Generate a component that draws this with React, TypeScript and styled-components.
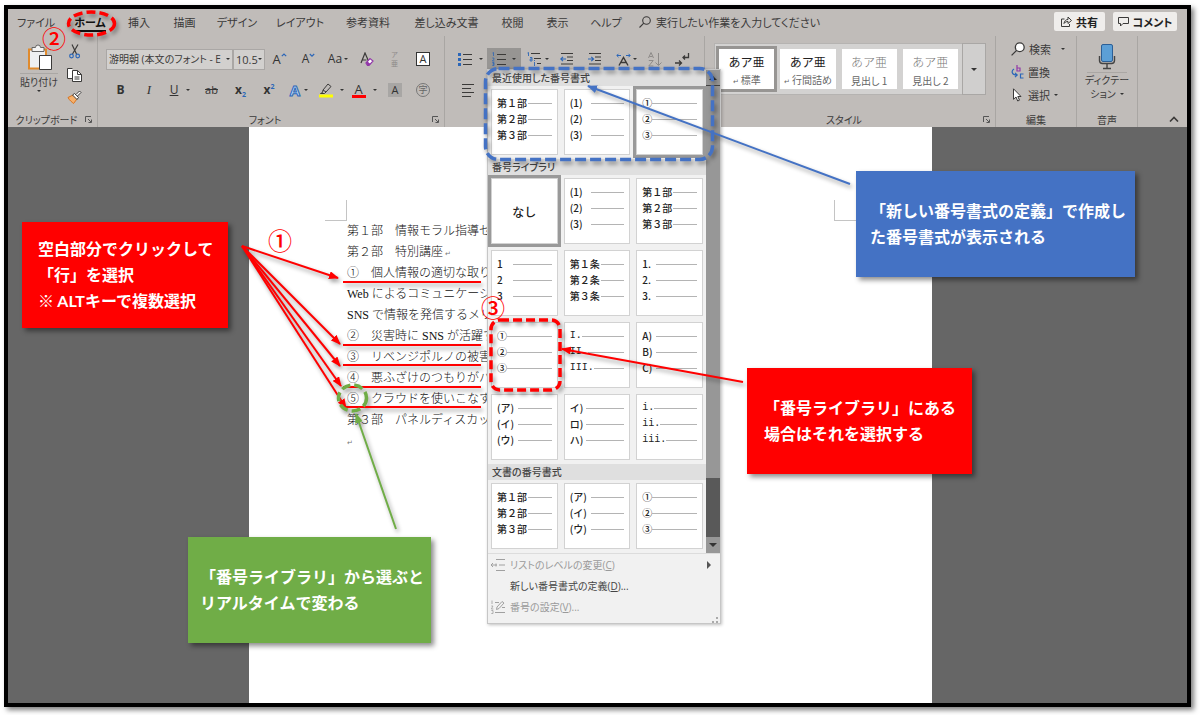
import React from 'react';
import styled, { createGlobalStyle, css } from 'styled-components';

const ui = `"Noto Sans CJK JP", "Noto Sans", sans-serif`;
const latin = `"Open Sans", "Noto Sans CJK JP", sans-serif`;
const ink = '#3b3a39';
const blue = '#2b66b8';
const ribbonGrey = '#c0bcb9';

const GlobalStyle = createGlobalStyle`
  *, *::before, *::after { box-sizing: border-box; }
  body { margin: 0; background: #fff; font-family: ${ui}; color: ${ink}; }
  button, select { font: inherit; color: inherit; margin: 0; padding: 0; border: 0; background: none; }
`;

const Stage = styled.div`
  position: relative;
  display: flex;
  min-height: 100vh;
  padding: 5px 9px 8px 4px;
  overflow: hidden;
`;

const Frame = styled.div`
  flex: 1;
  display: flex;
  flex-direction: column;
  min-width: 0;
  border: 4px solid #000;
  background: #666;
  box-shadow: 3px 3px 5px rgba(0, 0, 0, 0.5);
`;

/* ---------- Tab strip ---------- */

const TabStrip = styled.nav`
  display: flex;
  align-items: center;
  height: 27px;
  padding: 0 10px 2px 0;
  background: ${ribbonGrey};
  font-size: 11px;
  font-feature-settings: 'palt';
`;

const Tab = styled.button<{ $w: number; $active?: boolean }>`
  width: ${p => p.$w}px;
  height: 24px;
  line-height: 24px;
  white-space: nowrap;
  font-weight: ${p => (p.$active ? 700 : 400)};
  ${p => p.$active && css`
    color: #111;
    span { display: inline-block; height: 22px; border-bottom: 2px solid #111; }
  `}
`;

const TellMe = styled.button`
  display: flex;
  align-items: center;
  gap: 5px;
  margin-left: 7px;
  white-space: nowrap;
`;

const StripSpace = styled.div`flex: 1;`;

const StripButton = styled.button<{ $w: number }>`
  display: flex;
  align-items: center;
  justify-content: center;
  gap: 4px;
  width: ${p => p.$w}px;
  height: 19px;
  margin-left: 8px;
  border-radius: 2px;
  background: #efedeb;
  font-weight: 700;
  color: #222;
  white-space: nowrap;
`;

/* ---------- Ribbon ---------- */

const Ribbon = styled.div`
  display: flex;
  height: 91px;
  background: ${ribbonGrey};
`;

const Group = styled.section<{ $w?: number }>`
  display: flex;
  flex-direction: column;
  ${p => (p.$w ? css`width: ${p.$w}px; flex: none;` : css`flex: 1; min-width: 0;`)}
  border-right: 1px solid #a9a6a3;
`;

const GroupBody = styled.div`
  flex: 1;
  min-height: 0;
`;

const GroupFoot = styled.div<{ $launcher?: boolean }>`
  display: grid;
  grid-template-columns: 1fr ${p => (p.$launcher ? '12px' : '')};
  align-items: center;
  height: 15px;
  font-size: 10px;
  line-height: 14px;
  text-align: center;
  font-feature-settings: 'palt';
`;

const ClipboardBody = styled.div`
  display: flex;
  padding: 8px 0 0 12px;
  gap: 9px;
`;

const PasteButton = styled.button`
  display: flex;
  flex-direction: column;
  align-items: center;
  width: 38px;
  font-size: 10px;
  line-height: 16px;
  font-feature-settings: 'palt';
  white-space: nowrap;
`;

const SplitRule = styled.span`
  width: 100%;
  height: 1px;
  margin-top: 2px;
  background: #aaa7a4;
`;

const IconStack = styled.div`
  display: flex;
  flex-direction: column;
  gap: 8px;
  button { display: flex; }
`;

const Caret = styled.span<{ $size?: number }>`
  flex: none;
  border: ${p => p.$size ?? 2}px solid transparent;
  border-top-color: #333;
  border-bottom-width: 0;
`;

const ToolRows = styled.div`
  display: flex;
  flex-direction: column;
  gap: 11px;
  padding: 13px 0 0 8px;
`;

const ToolRow = styled.div`
  display: flex;
  align-items: center;
  height: 20px;
`;

const Tool = styled.button<{ $w: number; $on?: boolean; $gap?: number }>`
  display: flex;
  align-items: center;
  justify-content: center;
  gap: ${p => p.$gap ?? 4}px;
  flex: none;
  width: ${p => p.$w}px;
  height: 22px;
  font-family: ${latin};
  font-size: 13px;
  line-height: 20px;
  color: #333;
  background: ${p => (p.$on ? '#979593' : 'transparent')};
`;

const Combo = styled.span<{ $w: number; $size: number }>`
  display: flex;
  align-items: center;
  width: ${p => p.$w}px;
  height: 21px;
  padding-right: 2px;
  border: 1px solid #aaa7a5;
  background: #d2d0ce;
  select {
    flex: 1;
    min-width: 0;
    padding-left: 2px;
    appearance: none;
    font-family: ${latin};
    font-size: ${p => p.$size}px;
    white-space: nowrap;
    overflow: hidden;
    text-overflow: clip;
    font-feature-settings: 'palt';
  }
`;

const Glyph = styled.span<{ $bold?: boolean; $italic?: boolean; $line?: string; $size?: number }>`
  font-weight: ${p => (p.$bold ? 700 : 400)};
  font-style: ${p => (p.$italic ? 'italic' : 'normal')};
  font-family: ${p => (p.$italic ? '"Liberation Serif", serif' : 'inherit')};
  text-decoration: ${p => p.$line ?? 'none'};
  font-size: ${p => p.$size ?? 12}px;
  sub, sup { font-size: 7px; line-height: 0; color: ${blue}; }
`;

const BarGlyph = styled.span<{ $c: string }>`
  display: flex;
  justify-content: center;
  width: 14px;
  height: 15px;
  line-height: 12px;
  border-bottom: 3px solid ${p => p.$c};
`;

const OutlineGlyph = styled.span`
  font-size: 15px;
  font-weight: 700;
  color: #b9d5f2;
  -webkit-text-stroke: 1px ${blue};
`;

const BoxGlyph = styled.span<{ $kind: 'border' | 'shade' | 'ring' }>`
  display: flex;
  align-items: center;
  justify-content: center;
  width: 14px;
  height: 14px;
  font-size: ${p => (p.$kind === 'ring' ? 9 : 11)}px;
  line-height: 12px;
  ${p => p.$kind === 'border' && css`border: 1px solid #333; background: #fff;`}
  ${p => p.$kind === 'shade' && css`background: #a8a6a4;`}
  ${p => p.$kind === 'ring' && css`border: 1px solid #777; border-radius: 50%; color: #666;`}
`;

const Ruby = styled.span`
  display: flex;
  flex-direction: column;
  font-size: 7px;
  line-height: 9px;
  color: #8d8a88;
`;

const StyleBody = styled.div`
  display: flex;
  padding: 7px 9px 0;
`;

const StyleGallery = styled.div`
  display: grid;
  grid-template-columns: repeat(4, 1fr);
  flex: 1;
  gap: 6px;
  height: 52px;
  padding: 5px 4px;
  border: 1px solid #b5b3b1;
  border-right: 0;
  background: #d3d2d1;
`;

const StyleCard = styled.button<{ $on?: boolean; $light?: boolean }>`
  display: flex;
  flex-direction: column;
  align-items: center;
  justify-content: space-between;
  min-width: 0;
  padding: 4px 0 1px;
  background: #fff;
  outline: ${p => (p.$on ? '3px solid #979593' : 'none')};
  font-size: 12px;
  line-height: 18px;
  font-weight: ${p => (p.$light ? 300 : 400)};
  color: ${p => (p.$light ? '#777' : '#222')};
  white-space: nowrap;
`;

const StyleName = styled.span`
  font-size: 10px;
  line-height: 14px;
  font-weight: 400;
  color: #666;
  font-feature-settings: 'palt';
  small { font-size: 7px; }
`;

const MoreButton = styled.button`
  display: flex;
  align-items: center;
  justify-content: center;
  width: 24px;
  height: 52px;
  border: 1px solid #a9a7a5;
  background: #d0cfce;
`;

const EditList = styled.div`
  display: flex;
  flex-direction: column;
  gap: 3px;
  padding: 3px 0 0 15px;
`;

const EditButton = styled.button<{ $gap?: number }>`
  display: flex;
  align-items: center;
  gap: 4px;
  height: 20px;
  font-size: 11px;
  ${Caret} { margin-left: ${p => p.$gap ?? 0}px; }
`;

const DictateButton = styled.button`
  display: flex;
  flex-direction: column;
  align-items: center;
  width: 40px;
  margin: 8px auto 0;
  font-size: 10px;
  line-height: 14px;
  font-feature-settings: 'palt';
  white-space: nowrap;
`;

const CaretLine = styled.span`
  display: flex;
  align-items: center;
  gap: 4px;
`;

const CollapseSlot = styled.div`
  display: flex;
  align-items: flex-end;
  justify-content: flex-end;
  width: 49px;
  padding: 0 8px 0 0;
`;

/* ---------- Document ---------- */

const Canvas = styled.main`
  flex: 1;
  display: grid;
  grid-template-columns: 241fr 683px 255fr;
`;

const Paper = styled.article`
  grid-column: 2;
  padding: 73px 76px 0;
  background: #fff;
`;

const Crops = styled.div`
  display: flex;
  justify-content: space-between;
  height: 21px;
`;

const Crop = styled.span<{ $side: 'left' | 'right' }>`
  width: 22px;
  border-bottom: 1px solid #c4c4c4;
  ${p => (p.$side === 'left' ? 'border-right' : 'border-left')}: 1px solid #c4c4c4;
`;

const Lines = styled.div`
  padding-left: 22px;
  font-family: "Liberation Serif", "Noto Sans CJK JP", serif;
  font-size: 12px;
  line-height: 21px;
  color: #111;
  p { height: 21px; margin: 0; font-weight: 300; white-space: nowrap; }
  small { font-size: 7px; color: #777; }
`;

/* ---------- Numbering menu ---------- */

const Menu = styled.div`
  position: absolute;
  left: 487px;
  top: 69px;
  width: 234px;
  border: 1px solid #c6c6c6;
  background: #f1f1f1;
  box-shadow: 1px 1px 3px rgba(0, 0, 0, 0.25);
`;

const MenuScroll = styled.div`
  display: flex;
  border-bottom: 1px solid #dcdcdc;
`;

const MenuList = styled.div`
  flex: 1;
`;

const MenuHead = styled.h2`
  margin: 0;
  padding-left: 4px;
  background: #dfdfdf;
  font-size: 10px;
  line-height: 16px;
  font-weight: 500;
  color: #444;
  font-feature-settings: 'palt';
`;

const CellGrid = styled.div`
  display: grid;
  grid-template-columns: repeat(3, 1fr);
  gap: 6px;
  padding: 3px 3px 4px;
`;

const Cell = styled.button<{ $on?: boolean; $center?: boolean; $mono?: boolean }>`
  display: flex;
  flex-direction: column;
  justify-content: ${p => (p.$center ? 'center' : 'flex-start')};
  height: 66px;
  padding: ${p => (p.$center ? '0' : '5px 5px 0')};
  border: 1px solid #d2d2d2;
  background: #fff;
  outline: ${p => (p.$on ? '3px solid #999' : 'none')};
  font-family: ${p => (p.$mono ? '"Liberation Mono", monospace' : 'inherit')};
  font-size: ${p => (p.$center ? 12 : 10)}px;
  font-weight: 500;
  color: #222;
  text-align: center;
`;

const CellLine = styled.span`
  display: flex;
  align-items: center;
  width: 100%;
  height: 16px;
  line-height: 16px;
  &::after { content: ''; flex: 1; height: 1px; background: #b4b4b4; }
`;

const CellLabel = styled.span<{ $w: number }>`
  min-width: ${p => p.$w}px;
  text-align: left;
  white-space: nowrap;
`;

const ScrollBar = styled.div`
  display: flex;
  flex-direction: column;
  width: 14px;
  background: #595959;
`;

const ScrollArrow = styled.button<{ $down?: boolean }>`
  display: flex;
  align-items: center;
  justify-content: center;
  height: 16px;
  background: #979797;
  border-bottom: ${p => (p.$down ? 0 : '1px solid #444')};
  ${Caret} { transform: ${p => (p.$down ? 'none' : 'rotate(180deg)')}; }
`;

const ScrollThumb = styled.div`
  height: 392px;
  background: #979797;
`;

const ScrollGap = styled.div`flex: 1;`;

const MenuItem = styled.button<{ $off?: boolean }>`
  display: grid;
  grid-template-columns: 16px 1fr 8px;
  align-items: center;
  gap: 3px;
  width: 100%;
  height: 21px;
  padding: 0 5px 0 3px;
  font-family: ${latin};
  font-size: 10px;
  text-align: left;
  color: ${p => (p.$off ? '#9a9a9a' : '#444')};
  font-feature-settings: 'palt';
`;

const Grip = styled.div`
  display: flex;
  justify-content: flex-end;
  height: 6px;
`;

/* ---------- Annotations ---------- */

const Marks = styled.svg`
  position: absolute;
  left: 0;
  top: 0;
  pointer-events: none;
  filter: drop-shadow(2px 3px 2px rgba(0, 0, 0, 0.4));
`;

const Callout = styled.aside<{ $x: number; $y: number; $w: number; $pad: number; $c: string }>`
  position: absolute;
  left: ${p => p.$x}px;
  top: ${p => p.$y}px;
  display: flex;
  flex-direction: column;
  justify-content: center;
  width: ${p => p.$w}px;
  height: 106px;
  padding-left: ${p => p.$pad}px;
  background: ${p => p.$c};
  box-shadow: 3px 3px 5px rgba(0, 0, 0, 0.45);
  color: #fff;
  font-family: Lato, "Noto Sans CJK JP", sans-serif;
  font-size: 16px;
  font-weight: 700;
  line-height: 26px;
  white-space: nowrap;
`;

const Step = styled.span<{ $x: number; $y: number }>`
  position: absolute;
  left: ${p => p.$x}px;
  top: ${p => p.$y}px;
  width: 24px;
  font-size: 24px;
  line-height: 24px;
  font-weight: 500;
  color: #f00;
`;

/* ---------- Icons ---------- */

const Svg = ({ w, h, children }: { w: number; h: number; children: React.ReactNode }) => (
  <svg width={w} height={h} viewBox={`0 0 ${w} ${h}`} fill="none" stroke="#3b3a39" aria-hidden="true">
    {children}
  </svg>
);

const PasteIcon = () => (
  <Svg w={25} h={27}>
    <path d="M2 5.500h17v19H2z" fill="#eef0f2" stroke="#e08a2c" strokeWidth="2" />
    <path d="M5 3.500h3.500a2.500 2.500 0 0 1 5 0H17v4H5z" fill="#f4f4f4" stroke="#666" />
    <path d="M12.500 11.500h12v14h-12z" fill="#fff" />
  </Svg>
);
const CutIcon = () => (
  <Svg w={15} h={15}>
    <path d="M5 0.500 9.500 10M11 0.500 5.500 10" strokeWidth="1.200" />
    <circle cx="4.500" cy="12" r="1.800" stroke={blue} strokeWidth="1.200" />
    <circle cx="10.700" cy="12" r="1.800" stroke={blue} strokeWidth="1.200" />
  </Svg>
);
const CopyIcon = () => (
  <Svg w={15} h={15}>
    <path d="M5 11.500H.5V1.500h5" fill="#fff" />
    <path d="M5.500 3.500h5l4 4v7h-9z" fill="#fff" />
    <path d="M10.500 3.500v4h4M7.500 10h5M7.500 12h5" />
  </Svg>
);
const BrushIcon = () => (
  <Svg w={15} h={14}>
    <path d="M1 7.500 6 5l4 4-3.500 4.500C5 12 2.500 10.500 1 7.500z" fill="#f6b06b" stroke="#d9731c" />
    <path d="m5.500 5 2-1.500 4 4L10 9.500z" fill="#fff" />
    <path d="m9 4.500 3.500-3.500 1.500 1.500L10.500 6" fill="#fff" />
  </Svg>
);
const SearchIcon = ({ size = 12, fill = 'none' }: { size?: number; fill?: string }) => (
  <svg width={size} height={size} viewBox="0 0 12 12" fill={fill} stroke="#3b3a39" strokeWidth="1.100" aria-hidden="true">
    <circle cx="7.500" cy="4.500" r="3.800" />
    <path d="M4.800 7.200.5 11.500" />
  </svg>
);
const ShareIcon = () => (
  <Svg w={11} h={11}>
    <path d="M3.500 3H.5v7.500h8V8" />
    <path d="M3 7.500C3.300 4.800 5 3.500 7 3.500V1l3.500 3.500L7 7.500V5.500c-1.500 0-3 .5-4 2z" />
  </Svg>
);
const CommentIcon = () => (
  <Svg w={11} h={11}>
    <path d="M.5 1.500h10v6H5l-2.500 2.500V7.500h-2z" />
  </Svg>
);
const LauncherIcon = () => (
  <Svg w={8} h={8}>
    <path d="M.5 6V.5H6M3 3l3 3M6.500 3.500v3h-3" stroke="#555" />
  </Svg>
);
const GrowMark = ({ down }: { down?: boolean }) => (
  <svg width="6" height="12" viewBox="0 0 6 12" fill="none" stroke={blue} strokeWidth="1.200" aria-hidden="true">
    <path d={down ? 'M.8 1 3 3.200 5.200 1' : 'M.8 3.200 3 1l2.200 2.200'} />
  </svg>
);
const EraserIcon = () => (
  <Svg w={14} h={15}>
    <path d="M1 11 5 1l3.500 8M2.500 8h4" strokeWidth="1.200" />
    <path d="m6 11 4-4.500 3 2.500-4 4.500H7.500z" fill="#fff" stroke="#9137a8" strokeWidth="1.200" />
    <path d="m6 11 1.500-1.500 3 2.500L9 13.500H7.500z" fill="#9137a8" stroke="none" />
  </Svg>
);
const MarkerIcon = () => (
  <Svg w={14} h={15}>
    <path d="m4 7 5-6 3 2.500-5 5.500zM4 7l-.5 2.500L1.500 10.500h4L7 9" />
    <path d="M0 11.500h14v3H0z" fill="#ff0" stroke="none" />
  </Svg>
);
const BulletsIcon = () => (
  <Svg w={14} h={14}>
    <path d="M5 2.500h9M5 7.500h9M5 12.500h9" />
    <path d="M0 1h3v3H0zM0 6h3v3H0zM0 11h3v3H0z" fill={blue} stroke="none" />
  </Svg>
);
const NumbersIcon = () => (
  <Svg w={14} h={14}>
    <path d="M5 2.500h9M5 7.500h9M5 12.500h9" />
    <path d="M.5 1 1.500.5V4M.3 6h1.600v1.300L.4 9h2M.3 10.500H2v1.400H.8H2v1.600H.3" stroke={blue} strokeWidth=".8" />
  </Svg>
);
const MultiIcon = () => (
  <Svg w={14} h={14}>
    <path d="M4 1.500h9M7 6.500h7M10 11.500h4" />
    <path d="M.5 1 1.500.5V4M3 5.500h2V9H3.200V7H5M7.500 10v4M7.500 8v1" stroke={blue} strokeWidth=".9" />
  </Svg>
);
const IndentIcon = ({ out }: { out?: boolean }) => (
  <Svg w={14} h={12}>
    <path d="M1 .5h12M7 4h6M7 7.500h6M1 11h12" />
    <path d={out ? 'M6 6H1M3 3.800.8 6 3 8.200' : 'M0 6h5M3.300 3.800 5.500 6 3.300 8.200'} stroke={blue} strokeWidth="1.200" />
  </Svg>
);
const ScaleIcon = () => (
  <Svg w={15} h={13}>
    <path d="m3 12.500 4.500-8 4.500 8M4.800 9.500h5.400" strokeWidth="1.400" />
    <path d="M1 2.500h4M2.500.8.8 2.500l1.700 1.700M10 2.500h4M12.500.8l1.700 1.700-1.700 1.700" stroke={blue} />
  </Svg>
);
const SortIcon = () => (
  <Svg w={14} h={15}>
    <path d="M.5 6 3 .5 5.500 6M1.500 4.500h3M.8 8.500h4.400L.8 14h4.600M10.500 1v12M7.500 10.500l3 3 3-3" stroke="#8d8a88" />
  </Svg>
);
const MarksIcon = () => (
  <Svg w={15} h={13}>
    <path d="M13.500 0v4.500H8M10 2.500l-2 2 2 2M0 10h6M4 7.500 6.500 10 4 12.500" strokeWidth="1.300" />
  </Svg>
);
const AlignIcon = () => (
  <Svg w={13} h={13}>
    <path d="M0 .5h12M0 4.500h9M0 8.500h12M0 12.500h9" />
  </Svg>
);
const ReplaceIcon = () => (
  <Svg w={13} h={14}>
    <path d="M6 0v6h3V3H6" stroke="#9137a8" strokeWidth="1.200" />
    <path d="M12.500 9H9.500v4h3M3 4C0 6 .5 10 6 10M4 7.800 6.200 10 4 12.200" stroke={blue} strokeWidth="1.200" />
  </Svg>
);
const PointerIcon = () => (
  <Svg w={13} h={14}>
    <path d="M2.500.8v10.500L5 9l1.700 4 1.800-.8L6.800 8.500H10z" fill="#fff" />
  </Svg>
);
const MicIcon = () => (
  <Svg w={18} h={26}>
    <path d="M1.500 12v4.500a3 3 0 0 0 3 3h9a3 3 0 0 0 3-3V12M9 19.500V24M5 24.500h8" stroke="#444" strokeWidth="1.400" />
    <rect x="3.500" y=".5" width="11" height="17" rx="1.500" fill="#5c9fd6" stroke="#2c5f96" />
  </Svg>
);
const LevelIcon = () => (
  <Svg w={14} h={12}>
    <path d="M5 .5h9M8 6h6M5 11.500h9M0 6h6M2 4 0 6l2 2M5 4.500v3" stroke="#a0a0a0" />
  </Svg>
);
const SetNumberIcon = () => (
  <Svg w={14} h={14}>
    <path d="M4 2.500h4M4 12.500h10M11 7.500h3M5.500 9.500 6 7l5-5.500L13 3 8 8.500z" stroke="#a0a0a0" />
    <path d="M1 .5V4M.3 6h1.600L.4 9h2M.3 10.500H2v3H.3" stroke="#a0a0a0" strokeWidth=".8" />
  </Svg>
);

/* ---------- Data ---------- */

const tabs: [string, number][] = [
  ['ファイル', 56], ['ホーム', 52], ['挿入', 46], ['描画', 45], ['デザイン', 60], ['レイアウト', 66],
  ['参考資料', 70], ['差し込み文書', 87], ['校閲', 45], ['表示', 45], ['ヘルプ', 52],
];

type Format = { rows: [string, number][]; on?: boolean; mono?: boolean };
const fmt = (labels: string[], ...w: number[]): Format => ({
  rows: labels.map((l, i) => [l, w[i] ?? w[0]] as [string, number]),
});
const part = fmt(['第１部', '第２部', '第３部'], 31);
const paren = fmt(['(1)', '(2)', '(3)'], 21);
const ring = fmt(['①', '②', '③'], 10);
const kana = fmt(['(ア)', '(イ)', '(ウ)'], 21);

const recent: Format[] = [part, paren, { ...ring, on: true }];
const library: Format[] = [
  { rows: [], on: true },
  paren,
  part,
  fmt(['1', '2', '3'], 16),
  fmt(['第１条', '第２条', '第３条'], 31),
  fmt(['1.', '2.', '3.'], 14),
  ring,
  { ...fmt(['I.', 'II.', 'III.'], 12, 18, 22), mono: true },
  fmt(['A)', 'B)', 'C)'], 14),
  kana,
  fmt(['イ)', 'ロ)', 'ハ)'], 16),
  { ...fmt(['i.', 'ii.', 'iii.'], 12, 18, 22), mono: true },
];
const inDocument: Format[] = [part, kana, ring];

const lines = [
  '第１部　情報モラル指導セ', '第２部　特別講座', '①　個人情報の適切な取り', 'Web によるコミュニケーシ',
  'SNS で情報を発信するメリ', '②　災害時に SNS が活躍す', '③　リベンジポルノの被害', '④　悪ふざけのつもりがバ',
  '⑤　クラウドを使いこなす', '第３部　パネルディスカッ', '',
];

const Formats = ({ items }: { items: Format[] }) => (
  <CellGrid>
    {items.map((f, i) => (
      <Cell key={i} $on={f.on} $center={!f.rows.length} $mono={f.mono}>
        {f.rows.length
          ? f.rows.map(([label, w]) => (
              <CellLine key={label}><CellLabel $w={w}>{label}</CellLabel></CellLine>
            ))
          : 'なし'}
      </Cell>
    ))}
  </CellGrid>
);

const Foot = ({ label, launcher }: { label: string; launcher?: boolean }) => (
  <GroupFoot $launcher={launcher}>
    <span>{label}</span>
    {launcher && <LauncherIcon />}
  </GroupFoot>
);

const redArrows = [[338, 278], [340, 344], [340, 366], [341, 386], [346, 408]];
const underlines = [282, 345, 365, 387, 407];

export default function App() {
  return (
    <Stage>
      <GlobalStyle />
      <Frame>
        <TabStrip>
          {tabs.map(([name, w], i) => (
            <Tab key={name} $w={w} $active={i === 1}><span>{name}</span></Tab>
          ))}
          <TellMe><SearchIcon />実行したい作業を入力してください</TellMe>
          <StripSpace />
          <StripButton $w={51}><ShareIcon />共有</StripButton>
          <StripButton $w={64}><CommentIcon />コメント</StripButton>
        </TabStrip>

        <Ribbon>
          <Group $w={90}>
            <GroupBody>
              <ClipboardBody>
                <PasteButton>
                  <PasteIcon />
                  <SplitRule />
                  貼り付け
                  <Caret />
                </PasteButton>
                <IconStack>
                  <button aria-label="切り取り"><CutIcon /></button>
                  <button aria-label="コピー"><CopyIcon /></button>
                  <button aria-label="書式のコピー"><BrushIcon /></button>
                </IconStack>
              </ClipboardBody>
            </GroupBody>
            <Foot label="クリップボード" launcher />
          </Group>

          <Group $w={347}>
            <GroupBody>
              <ToolRows>
                <ToolRow>
                  <Combo $w={127} $size={10}>
                    <select aria-label="フォント名"><option>游明朝 (本文のフォント - E</option></select>
                    <Caret />
                  </Combo>
                  <Combo $w={32} $size={11}>
                    <select aria-label="フォント サイズ"><option>10.5</option></select>
                    <Caret />
                  </Combo>
                  <Tool $w={29} $gap={0}><Glyph $size={13}>A</Glyph><GrowMark /></Tool>
                  <Tool $w={29} $gap={0}><Glyph>A</Glyph><GrowMark down /></Tool>
                  <Tool $w={30} $gap={2}><Glyph>Aa</Glyph><Caret /></Tool>
                  <Tool $w={27} aria-label="書式のクリア"><EraserIcon /></Tool>
                  <Tool $w={29}><Ruby><span>ア</span><span>亜</span></Ruby></Tool>
                  <Tool $w={28}><BoxGlyph $kind="border">A</BoxGlyph></Tool>
                </ToolRow>
                <ToolRow>
                  <Tool $w={29}><Glyph $bold>B</Glyph></Tool>
                  <Tool $w={28}><Glyph $italic $size={13}>I</Glyph></Tool>
                  <Tool $w={34} $gap={8}><Glyph $line="underline">U</Glyph><Caret /></Tool>
                  <Tool $w={29}><Glyph $line="line-through" $size={11}>ab</Glyph></Tool>
                  <Tool $w={29}><Glyph $bold>x<sub>2</sub></Glyph></Tool>
                  <Tool $w={28}><Glyph $bold>x<sup>2</sup></Glyph></Tool>
                  <Tool $w={32}><OutlineGlyph>A</OutlineGlyph><Caret /></Tool>
                  <Tool $w={32} $gap={7} aria-label="蛍光ペンの色"><MarkerIcon /><Caret /></Tool>
                  <Tool $w={34} $gap={7}><BarGlyph $c="#f00">A</BarGlyph><Caret /></Tool>
                  <Tool $w={28}><BoxGlyph $kind="shade">A</BoxGlyph></Tool>
                  <Tool $w={28}><BoxGlyph $kind="ring">字</BoxGlyph></Tool>
                </ToolRow>
              </ToolRows>
            </GroupBody>
            <Foot label="フォント" launcher />
          </Group>

          <Group $w={260}>
            <GroupBody>
              <ToolRows>
                <ToolRow>
                  <Tool $w={34} $gap={7} aria-label="箇条書き"><BulletsIcon /><Caret /></Tool>
                  <Tool $w={34} $gap={6} $on aria-label="段落番号"><NumbersIcon /><Caret /></Tool>
                  <Tool $w={34} aria-label="アウトライン"><MultiIcon /><Caret /></Tool>
                  <Tool $w={24} aria-label="インデントを減らす"><IndentIcon out /></Tool>
                  <Tool $w={31} aria-label="インデントを増やす"><IndentIcon /></Tool>
                  <Tool $w={33} $gap={2} aria-label="拡張書式"><ScaleIcon /><Caret /></Tool>
                  <Tool $w={24} aria-label="並べ替え"><SortIcon /></Tool>
                  <Tool $w={31} aria-label="編集記号"><MarksIcon /></Tool>
                </ToolRow>
                <ToolRow>
                  <Tool $w={30} aria-label="左揃え"><AlignIcon /></Tool>
                </ToolRow>
              </ToolRows>
            </GroupBody>
          </Group>

          <Group>
            <GroupBody>
              <StyleBody>
                <StyleGallery>
                  <StyleCard $on>あア亜<StyleName><small>↵</small> 標準</StyleName></StyleCard>
                  <StyleCard>あア亜<StyleName><small>↵</small> 行間詰め</StyleName></StyleCard>
                  <StyleCard $light>あア亜<StyleName>見出し 1</StyleName></StyleCard>
                  <StyleCard $light>あア亜<StyleName>見出し 2</StyleName></StyleCard>
                </StyleGallery>
                <MoreButton aria-label="その他"><Caret $size={3} /></MoreButton>
              </StyleBody>
            </GroupBody>
            <Foot label="スタイル" launcher />
          </Group>

          <Group $w={81}>
            <GroupBody>
              <EditList>
                <EditButton $gap={6}><SearchIcon size={14} fill="#fff" />検索<Caret /></EditButton>
                <EditButton><ReplaceIcon />置換</EditButton>
                <EditButton><PointerIcon />選択<Caret /></EditButton>
              </EditList>
            </GroupBody>
            <Foot label="編集" />
          </Group>

          <Group $w={61}>
            <GroupBody>
              <DictateButton>
                <MicIcon />
                <SplitRule />
                ディクテー
                <CaretLine>ション<Caret /></CaretLine>
              </DictateButton>
            </GroupBody>
            <Foot label="音声" />
          </Group>

          <CollapseSlot>
            <button aria-label="リボンを折りたたむ">
              <Svg w={10} h={6}><path d="M1 5.500 5 1.500l4 4" strokeWidth="1.600" /></Svg>
            </button>
          </CollapseSlot>
        </Ribbon>

        <Canvas>
          <Paper>
            <Crops><Crop $side="left" /><Crop $side="right" /></Crops>
            <Lines>
              {lines.map((l, i) => (
                <p key={i}>{l}{(i === 1 || i === 10) && <small> ↵</small>}</p>
              ))}
            </Lines>
          </Paper>
        </Canvas>
      </Frame>

      <Menu>
        <MenuScroll>
          <MenuList>
            <MenuHead>最近使用した番号書式</MenuHead>
            <Formats items={recent} />
            <MenuHead>番号ライブラリ</MenuHead>
            <Formats items={library} />
            <MenuHead>文書の番号書式</MenuHead>
            <Formats items={inDocument} />
          </MenuList>
          <ScrollBar>
            <ScrollArrow aria-label="上へ"><Caret $size={4} /></ScrollArrow>
            <ScrollThumb />
            <ScrollGap />
            <ScrollArrow $down aria-label="下へ"><Caret $size={4} /></ScrollArrow>
          </ScrollBar>
        </MenuScroll>
        <MenuItem $off>
          <LevelIcon />
          <span>リストのレベルの変更(<u>C</u>)</span>
          <svg width="5" height="8" aria-hidden="true"><path d="M0 0l4 4-4 4z" fill="#555" /></svg>
        </MenuItem>
        <MenuItem><span /><span>新しい番号書式の定義(<u>D</u>)...</span></MenuItem>
        <MenuItem $off><SetNumberIcon /><span>番号の設定(<u>V</u>)...</span></MenuItem>
        <Grip>
          <svg width="8" height="6" aria-hidden="true">
            <path d="M4 0h2v2H4zM4 4h2v2H4zM0 4h2v2H0z" fill="#aaa" />
          </svg>
        </Grip>
      </Menu>

      <Marks width="1200" height="715" viewBox="0 0 1200 715" fill="none" aria-hidden="true">
        <defs>
          {[['r', '#f00'], ['b', '#4472c4'], ['g', '#70ad47']].map(([id, c]) => (
            <marker key={id} id={id} markerUnits="userSpaceOnUse" markerWidth="10" markerHeight="8" refX="9" refY="4" orient="auto">
              <path d="M0 0l10 4-10 4z" fill={c} />
            </marker>
          ))}
        </defs>
        <g stroke="#f00" strokeWidth="2">
          {redArrows.map(([x, y]) => <path key={y} d={`M242 246 ${x} ${y}`} markerEnd="url(#r)" />)}
          {underlines.map(y => <path key={y} d={`M343 ${y}H481`} />)}
          <path d="M743 382 562 349" markerEnd="url(#r)" />
        </g>
        <ellipse cx="91.500" cy="23.500" rx="23" ry="11.500" stroke="#f00" strokeWidth="3.500" strokeDasharray="9 4" />
        <rect x="491" y="320" width="69" height="70" rx="9" stroke="#f00" strokeWidth="3.500" strokeDasharray="9 4" />
        <rect x="485.500" y="68.500" width="227" height="91" rx="13" stroke="#4472c4" strokeWidth="3.500" strokeDasharray="11 4" />
        <path d="M850 184 588 86" stroke="#4472c4" strokeWidth="2" markerEnd="url(#b)" />
        <ellipse cx="352.500" cy="398" rx="14" ry="13" stroke="#70ad47" strokeWidth="3.500" strokeDasharray="9 4" />
        <path d="M396 529 356 414" stroke="#70ad47" strokeWidth="2" markerEnd="url(#g)" />
      </Marks>

      <Step $x={268} $y={228}>①</Step>
      <Step $x={42} $y={26}>②</Step>
      <Step $x={481} $y={295}>③</Step>

      <Callout $x={22} $y={222} $w={206} $pad={16} $c="#f00">
        <span>空白部分でクリックして</span>
        <span>「行」を選択</span>
        <span>※ ALTキーで複数選択</span>
      </Callout>
      <Callout $x={856} $y={171} $w={279} $pad={14} $c="#4472c4">
        <span>「新しい番号書式の定義」で作成し</span>
        <span>た番号書式が表示される</span>
      </Callout>
      <Callout $x={747} $y={368} $w={225} $pad={17} $c="#f00">
        <span>「番号ライブラリ」にある</span>
        <span>場合はそれを選択する</span>
      </Callout>
      <Callout $x={188} $y={537} $w={243} $pad={12} $c="#70ad47">
        <span>「番号ライブラリ」から選ぶと</span>
        <span>リアルタイムで変わる</span>
      </Callout>
    </Stage>
  );
}
